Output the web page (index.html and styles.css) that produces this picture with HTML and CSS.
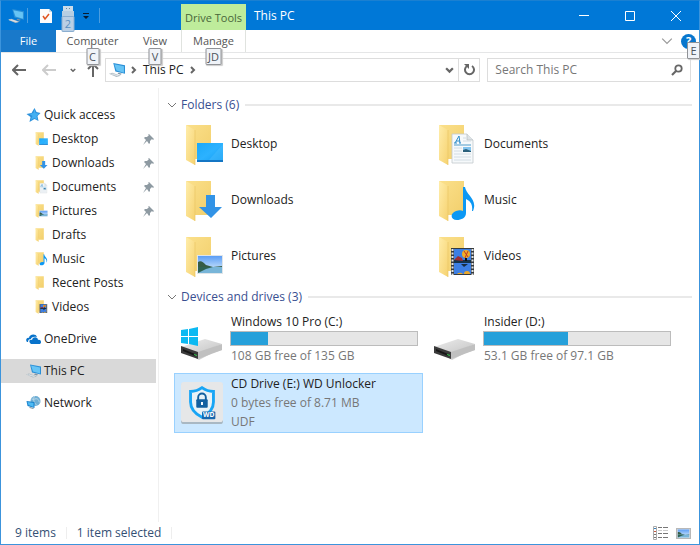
FILE: index.html
```html
<!DOCTYPE html>
<html lang="en">

<head>
    <meta charset="UTF-8">
    <title>This PC</title>
    <link rel="stylesheet" href="styles.css">
</head>

<body>

    <!-- shared icons -->
    <svg class="sprite" aria-hidden="true">
        <defs>
            <linearGradient id="folder-front" x1="0" y1="0" x2="1" y2="1">
                <stop offset="0" stop-color="#ffedaa" />
                <stop offset="1" stop-color="#f6d270" />
            </linearGradient>
            <linearGradient id="folder-back" x1="0" y1="0" x2="1" y2="1">
                <stop offset="0" stop-color="#fbe08b" />
                <stop offset="1" stop-color="#f2cf6c" />
            </linearGradient>
            <linearGradient id="screen" x1="0" y1="0" x2="1" y2="1">
                <stop offset="0" stop-color="#1ba8f8" />
                <stop offset="0.5" stop-color="#2cb2ff" />
                <stop offset="1" stop-color="#129df2" />
            </linearGradient>
            <linearGradient id="sky" x1="0" y1="0" x2="0" y2="1">
                <stop offset="0" stop-color="#5b9df5" />
                <stop offset="1" stop-color="#e6f5fd" />
            </linearGradient>
            <linearGradient id="metal" x1="0" y1="0" x2="1" y2="1">
                <stop offset="0" stop-color="#ececec" />
                <stop offset="1" stop-color="#c4c4c4" />
            </linearGradient>
        </defs>

        <symbol id="pc" viewBox="0 0 15 13">
            <path d="M4 0l11 2v8L6 8z" fill="#2b8fd6" />
            <path d="M5 1l9 2v6L7 7z" fill="#67c4f5" />
            <path d="M9 9l3 1-1 1-3-1z" fill="#7d93a3" />
            <path d="M0 10l3-1 8 3-4 1z" fill="#a9b6bf" />
            <path d="M1 10l7 2M3 10l6 2" stroke="#e7ecef" stroke-width=".6" />
        </symbol>

        <symbol id="folder" viewBox="0 0 38 42">
            <path d="M1 1h25v34H10z" fill="url(#folder-back)" />
            <path d="M1 1l9 5v35l-9-5z" fill="url(#folder-front)" />
            <path d="M10 6v35" stroke="#e9c665" stroke-width=".7" />
        </symbol>

        <symbol id="picture" viewBox="0 0 26 19">
            <path d="M0 0h26v19H0z" fill="#dfe5e9" />
            <path d="M1 1h24v17H1z" fill="url(#sky)" />
            <path d="M1 7c3-2 6 1 8 3l7 2 9-1v1H1z" fill="#365c45" />
            <path d="M1 12h24v6H1z" fill="#78b5d8" />
            <path d="M1 12h15l-7 2-8 4z" fill="#2f6252" />
        </symbol>

        <symbol id="desktop" viewBox="0 0 38 42">
            <use href="#folder" />
            <path d="M12 19h26v19H12z" fill="url(#screen)" />
            <path d="M12 36h26v2H12z" fill="#1476c4" />
            <path d="M24 36 38 20v16z" fill="#55c2ff" opacity=".35" />
        </symbol>

        <symbol id="downloads" viewBox="0 0 38 42">
            <use href="#folder" />
            <path d="M21 15h9v12h7L26 38 14 27h7z" fill="#3293e6" />
        </symbol>

        <symbol id="documents" viewBox="0 0 38 42">
            <use href="#folder" />
            <path d="M14 10h15l6 6v23H14z" fill="#f6f9fb" stroke="#c3c9cd" stroke-width=".8" />
            <path d="M29 10v6h6" fill="#dde3e7" stroke="#b4bbc0" stroke-width=".7" />
            <path d="M17 19l4-7 1 7M18 17h4M16 19h3M21 19h2" fill="none" stroke="#2d8cc9" stroke-width="1" />
            <path d="M16 21h17" stroke="#4f9bc9" />
            <path d="M16 24h8M16 27h8M16 30h17M16 33h17M16 36h17M25 14h3M25 17h8" stroke="#cbd7df" stroke-width=".8" />
            <path d="M25 23h8v5h-8z" fill="#83c4ef" />
            <path d="M25 26l3-1 5 2v1h-8z" fill="#2a607b" />
        </symbol>

        <symbol id="music" viewBox="0 0 38 42">
            <use href="#folder" />
            <path d="M25 7h2c1 8 13 12 8 24h-1c1-7-2-10-6-12v14c0 5-5 7-9 7-7 0-7-7-1-9 3-1 5-1 7 0z" fill="#0c98f4" />
        </symbol>

        <symbol id="videos" viewBox="0 0 38 42">
            <use href="#folder" />
            <path d="M13 12h23v27H13z" fill="#363a3d" />
            <path d="M14.500 13v26M34.500 13v26" stroke="#e1e4e5" stroke-width="2" stroke-dasharray="2 1.500" />
            <path d="M16 13h17v12H16zM16 27h17v11H16z" fill="#3d7fe3" />
            <path d="M16 24h17v3H16z" fill="#15334a" />
            <path d="M16 24l4-4 4 2 1 3z" fill="#9e2f35" />
            <ellipse cx="28" cy="18" rx="4" ry="4" fill="#f2ad24" />
            <path d="M26 15l4 6M30 15l-3 7" stroke="#be352b" />
            <path d="M28 22v3" stroke="#111" stroke-width="2" />
            <path d="M19 38a4 4 0 0 1 6 0M26 38a3 3 0 0 1 6 0" fill="#eda827" />
            <path d="M23 28l3 3 4-3z" fill="#182d40" />
        </symbol>

        <symbol id="pictures" viewBox="0 0 38 42">
            <use href="#folder" />
            <use href="#picture" x="12" y="19" width="26" height="19" />
        </symbol>

        <symbol id="star" viewBox="0 0 14 14">
            <path d="M8 0l2 4 4 1-3 3 1 5-4-2-5 3 1-5-4-3 5-1z" fill="#2d91db" />
            <path d="M8 1l1 4 4 1-3 2 1 4-3-2-4 2 2-4-3-2 4-1z" fill="#43b0f2" />
        </symbol>

        <symbol id="onedrive" viewBox="0 0 15 10">
            <path d="M2 8H1C-1 6 1 3 3 4c0-4 7-5 8-1-4-1-6 1-6 2-2 0-3 1-3 3z" fill="#0873cb" />
            <path d="M4 9c-2-3 1-4 2-3 1-4 6-3 6 0 3-1 4 3 2 4H5z" fill="#0873cb" />
        </symbol>

        <symbol id="network" viewBox="0 0 14 14">
            <circle cx="9" cy="5" r="5" fill="#6faed4" />
            <path d="M5 3c3 1 4-1 6 0s1 4 3 3M8 0c-2 4 0 7 2 9" fill="none" stroke="#b8d8e9" />
            <path d="M0 5l8 1v6l-7-2z" fill="#1b82cb" />
            <path d="M1 6l6 1v4L2 9z" fill="#4dbaf4" />
            <path d="M3 11l4 1v1l-4-1z" fill="#758d9d" />
        </symbol>

        <symbol id="pin" viewBox="0 0 11 11">
            <path d="M6 0l5 5-1 1-1-1-2 2v2L6 10 4 7 0 11l3-5L1 4l1-1h2l2-2-1-1z" fill="#8e9aa2" />
        </symbol>

        <symbol id="chevron" viewBox="0 0 10 6">
            <path d="M1 1l4 4 4-4" fill="none" stroke="currentColor" />
        </symbol>

        <symbol id="chevron-bold" viewBox="0 0 8 6">
            <path d="M1 1l3 3 3-3" fill="none" stroke="currentColor" stroke-width="2" />
        </symbol>

        <symbol id="chevron-right" viewBox="0 0 6 8">
            <path d="M1 1l3 3-3 3" fill="none" stroke="currentColor" stroke-width="2" />
        </symbol>

        <symbol id="arrow" viewBox="0 0 14 12">
            <path d="M14 6H2M6 1L1 6l5 5" fill="none" stroke="currentColor" stroke-width="2" />
        </symbol>

        <symbol id="drive" viewBox="0 0 42 34">
            <path d="M0 22l16 9 25-8v-2L18 33z" fill="#8b8b8b" opacity=".4" />
            <path d="M0 20l24-8 17 5-24 10z" fill="url(#metal)" />
            <path d="M17 25l24-8v6l-24 9z" fill="#c0c0c0" />
            <path d="M0 19l17 6v7L0 26z" fill="#3b3b3b" />
            <path d="M2 22l12 5v2L2 24z" fill="#171717" />
            <path d="M13 27l3 1v1l-3-1z" fill="#2fc748" />
        </symbol>
    </svg>

    <div class="window">

        <header class="titlebar">
            <div class="quick-bar">
                <svg class="icon-pc"><use href="#pc" /></svg>
                <span class="bar-line"></span>
                <button class="quick-btn" aria-label="Properties">
                    <svg width="12" height="14" viewBox="0 0 12 14">
                        <path d="M0 0h9l3 3v11H0z" fill="#fbfbfb" />
                        <path d="M9 0v3h3" fill="#d3dce3" />
                        <path d="M3 7l2 3 4-5" fill="none" stroke="#e0531f" stroke-width="1.500" />
                    </svg>
                </button>
                <button class="quick-btn" aria-label="Eject">
                    <svg width="12" height="20" viewBox="0 0 12 20">
                        <path d="M1 0h10v5H1z" fill="#cadbe9" />
                        <path d="M0 5h12v15H0z" fill="#b7cee2" />
                        <path d="M4 2h1v1H4zM7 2h1v1H7z" fill="#728899" />
                    </svg>
                    <kbd class="keytip keytip-dim">2</kbd>
                </button>
                <button class="quick-btn quick-menu" aria-label="Customize toolbar">
                    <svg width="6" height="6" viewBox="0 0 6 6">
                        <path d="M0 0h6v1H0zM0 3h6L3 6z" fill="#071d33" />
                    </svg>
                </button>
                <span class="bar-line"></span>
            </div>
            <div class="context-tab">Drive Tools</div>
            <h1 class="window-title">This PC</h1>
            <div class="window-controls">
                <button aria-label="Minimize">
                    <svg width="10" height="10" viewBox="0 0 10 10"><path d="M0 4.500h10" stroke="#fff" /></svg>
                </button>
                <button aria-label="Maximize">
                    <svg width="10" height="10" viewBox="0 0 10 10"><path d="M.5.5h9v9h-9z" fill="none" stroke="#fff" /></svg>
                </button>
                <button aria-label="Close">
                    <svg width="10" height="10" viewBox="0 0 10 10"><path d="M0 0l10 10M10 0L0 10" stroke="#fff" /></svg>
                </button>
            </div>
        </header>

        <nav class="ribbon">
            <button class="tab tab-file">File</button>
            <button class="tab tab-computer">Computer<kbd class="keytip">C</kbd></button>
            <button class="tab tab-view">View<kbd class="keytip">V</kbd></button>
            <button class="tab tab-manage">Manage<kbd class="keytip">JD</kbd></button>
            <div class="ribbon-right">
                <button class="expand" aria-label="Expand the Ribbon">
                    <svg width="12" height="8"><use href="#chevron" /></svg>
                </button>
                <button class="help" aria-label="Help">?<kbd class="keytip">E</kbd></button>
            </div>
        </nav>

        <div class="address-row">
            <div class="nav-buttons">
                <button aria-label="Back"><svg width="14" height="12"><use href="#arrow" /></svg></button>
                <button class="forward" aria-label="Forward"><svg width="14" height="12"><use href="#arrow" /></svg></button>
                <button class="recent" aria-label="Recent locations"><svg width="6" height="5"><use href="#chevron-bold" /></svg></button>
                <button class="up" aria-label="Up"><svg width="14" height="12"><use href="#arrow" /></svg></button>
            </div>
            <div class="address">
                <svg class="icon-pc"><use href="#pc" /></svg>
                <button aria-label="Locations"><svg width="6" height="8"><use href="#chevron-right" /></svg></button>
                <button class="crumb">This PC</button>
                <button aria-label="Folders in This PC"><svg width="6" height="8"><use href="#chevron-right" /></svg></button>
                <button class="history" aria-label="Previous locations"><svg width="9" height="7"><use href="#chevron-bold" /></svg></button>
                <button class="refresh" aria-label="Refresh">
                    <svg width="12" height="12" viewBox="0 0 12 12">
                        <path d="M9 2a4.500 4.500 0 1 1-5 0" fill="none" stroke="#666" stroke-width="2" />
                        <path d="M1 0h5v5z" fill="#666" />
                    </svg>
                </button>
            </div>
            <label class="search">
                <input type="text" placeholder="Search This PC" aria-label="Search This PC">
                <svg width="12" height="12" viewBox="0 0 12 12">
                    <circle cx="7.500" cy="4.500" r="3.200" fill="none" stroke="#666" stroke-width="1.800" />
                    <path d="M5 7l-4 4" stroke="#666" stroke-width="2.200" />
                </svg>
            </label>
        </div>

        <div class="content">
            <nav class="sidebar">
                <a class="side-item" href="#"><svg><use href="#star" /></svg>Quick access</a>
                <a class="side-item sub" href="#"><svg><use href="#desktop" /></svg>Desktop<svg class="pin"><use href="#pin" /></svg></a>
                <a class="side-item sub" href="#"><svg><use href="#downloads" /></svg>Downloads<svg class="pin"><use href="#pin" /></svg></a>
                <a class="side-item sub" href="#"><svg><use href="#documents" /></svg>Documents<svg class="pin"><use href="#pin" /></svg></a>
                <a class="side-item sub" href="#"><svg><use href="#pictures" /></svg>Pictures<svg class="pin"><use href="#pin" /></svg></a>
                <a class="side-item sub" href="#"><svg><use href="#folder" /></svg>Drafts</a>
                <a class="side-item sub" href="#"><svg><use href="#music" /></svg>Music</a>
                <a class="side-item sub" href="#"><svg><use href="#folder" /></svg>Recent Posts</a>
                <a class="side-item sub" href="#"><svg><use href="#videos" /></svg>Videos</a>
                <a class="side-item root" href="#"><svg><use href="#onedrive" /></svg>OneDrive</a>
                <a class="side-item root selected" href="#"><svg><use href="#pc" /></svg>This PC</a>
                <a class="side-item root" href="#"><svg><use href="#network" /></svg>Network</a>
            </nav>

            <main class="files">
                <section>
                    <h2 class="group-title"><svg width="10" height="6"><use href="#chevron" /></svg>Folders (6)</h2>
                    <div class="folder-grid">
                        <a class="folder" href="#"><svg><use href="#desktop" /></svg>Desktop</a>
                        <a class="folder" href="#"><svg><use href="#documents" /></svg>Documents</a>
                        <a class="folder" href="#"><svg><use href="#downloads" /></svg>Downloads</a>
                        <a class="folder" href="#"><svg><use href="#music" /></svg>Music</a>
                        <a class="folder" href="#"><svg><use href="#pictures" /></svg>Pictures</a>
                        <a class="folder" href="#"><svg><use href="#videos" /></svg>Videos</a>
                    </div>
                </section>
                <section>
                    <h2 class="group-title"><svg width="10" height="6"><use href="#chevron" /></svg>Devices and drives (3)</h2>
                    <div class="drive-grid">
                        <a class="drive" href="#">
                            <svg class="drive-icon" viewBox="0 0 42 34">
                                <use href="#drive" />
                                <path d="M0 3l7-1v7H0zM8 2l9-2v9H8zM0 10h7v7l-7-1zM8 10h9v9l-9-2z" fill="#0bb9f2" />
                            </svg>
                            <div class="drive-info">
                                <span class="drive-name">Windows 10 Pro (C:)</span>
                                <div class="usage"><div class="used" style="width: 20%"></div></div>
                                <span class="drive-note">108 GB free of 135 GB</span>
                            </div>
                        </a>
                        <a class="drive" href="#">
                            <svg class="drive-icon"><use href="#drive" /></svg>
                            <div class="drive-info">
                                <span class="drive-name">Insider (D:)</span>
                                <div class="usage"><div class="used" style="width: 45%"></div></div>
                                <span class="drive-note">53.1 GB free of 97.1 GB</span>
                            </div>
                        </a>
                        <a class="drive selected" href="#">
                            <svg class="cd-icon" viewBox="0 0 44 46">
                                <rect x="0" y="2" width="44" height="43" rx="3" fill="#a9b8c3" />
                                <rect x="0" y="1" width="44" height="42" rx="3" fill="#e6e7e8" />
                                <path d="M22 7c4 3 8 4 12 4v11c0 8-6 13-12 16-6-3-12-8-12-16V11c4 0 8-1 12-4z" fill="#e9f2f7" stroke="#18a5f5" stroke-width="3" />
                                <path d="M18 20v-3a4 4 0 0 1 8 0v3" fill="none" stroke="#125f9f" stroke-width="2" />
                                <rect x="16" y="19" width="12" height="9" rx="1" fill="#125f9f" />
                                <path d="M22 22v3" stroke="#fff" stroke-width="2" />
                                <rect x="22" y="32" width="14" height="8" rx="1" fill="#1768ae" />
                                <text class="wd-mark" x="23" y="38">WD</text>
                            </svg>
                            <div class="drive-info">
                                <span class="drive-name">CD Drive (E:) WD Unlocker</span>
                                <span class="drive-note">0 bytes free of 8.71 MB</span>
                                <span class="drive-note">UDF</span>
                            </div>
                        </a>
                    </div>
                </section>
            </main>
        </div>

        <footer class="statusbar">
            <span class="status">9 items</span>
            <span class="status">1 item selected</span>
            <div class="view-buttons">
                <button aria-label="Details view">
                    <svg width="15" height="14" viewBox="0 0 15 14">
                        <path d="M.5.5h3v13h-3z" fill="#fff" stroke="#aaa" />
                        <path d="M1 2h2v1H1z" fill="#397fb8" />
                        <path d="M1 5h2v1H1z" fill="#c65a42" />
                        <path d="M1 8h2v1H1zM1 11h2v1H1z" fill="#777" />
                        <path d="M5 1.500h4M10 1.500h5M5 7.500h4M10 7.500h5M5 11.500h4M10 11.500h5" stroke="#777" />
                        <path d="M5 4.500h4M10 4.500h5" stroke="#ccc" />
                    </svg>
                </button>
                <button aria-label="Large icons view">
                    <svg width="15" height="11" viewBox="0 0 15 11">
                        <path d="M0 0h15v11H0z" fill="#b8b8b8" />
                        <use href="#picture" x="1" y="1" width="13" height="9" />
                    </svg>
                </button>
            </div>
        </footer>
    </div>

</body>

</html>
```

FILE: styles.css
```css
* {
    box-sizing: border-box;
}

body {
    margin: 0;
    font-family: "Open Sans", "Noto Sans", sans-serif;
    font-size: 12px;
    line-height: 18px;
    color: #222;
    background: #fff;
}

button {
    position: relative;
    display: flex;
    align-items: center;
    justify-content: center;
    padding: 0;
    border: 0;
    background: none;
    font: inherit;
    color: #666;
}

a {
    color: inherit;
    text-decoration: none;
}

svg {
    flex: none;
}

.sprite {
    position: absolute;
    width: 0;
    height: 0;
}

.window {
    display: flex;
    flex-direction: column;
    min-height: 100vh;
    border: 1px solid #3c94dc;
    border-top-color: #1b80d1;
}

.icon-pc {
    width: 16px;
    height: 14px;
}

/* title bar */
.titlebar {
    display: flex;
    height: 29px;
    background: #0078d7;
    color: #fff;
}

.quick-bar {
    display: flex;
    align-items: center;
    width: 180px;
    padding-left: 7px;
}

.bar-line {
    width: 1px;
    height: 15px;
    margin: 0 3px;
    background: #4a9de0;
}

.quick-btn {
    width: 22px;
    height: 28px;
}

.quick-btn:first-of-type {
    margin-left: 4px;
}

.quick-menu {
    width: 14px;
}

.quick-btn + .bar-line {
    margin-left: 6px;
}

.context-tab {
    width: 65px;
    margin-top: 3px;
    padding-top: 5px;
    background: #beec9b;
    color: #48663a;
    font-size: 11px;
    text-align: center;
    white-space: nowrap;
}

.window-title {
    margin: 0;
    padding: 6px 8px;
    font-size: 12px;
    font-weight: normal;
}

.window-controls {
    display: flex;
    margin-left: auto;
}

.window-controls button {
    width: 46px;
}

/* ribbon */
.ribbon {
    display: flex;
    height: 23px;
    border-bottom: 1px solid #e5e6e7;
}

.tab {
    font-size: 11px;
    color: #555;
}

.tab-file {
    width: 55px;
    background: #1979ca;
    color: #fff;
}

.tab-computer {
    width: 73px;
}

.tab-view {
    width: 52px;
}

.tab-manage {
    width: 65px;
    border: solid #e0e3df;
    border-width: 0 1px;
}

.ribbon-right {
    display: flex;
    align-items: center;
    gap: 8px;
    margin-left: auto;
}

.expand {
    color: #999;
}

.help {
    width: 15px;
    height: 15px;
    margin-right: 3px;
    border-radius: 50%;
    background: #0877ce;
    color: #fff;
    font-size: 11px;
    font-weight: bold;
}

/* key hints over the ribbon */
.keytip {
    position: absolute;
    z-index: 1;
    top: 18px;
    left: 50%;
    min-width: 13px;
    padding: 0 2px;
    border: 1px solid #909296;
    border-radius: 1px;
    background: #f0f3f8;
    box-shadow: 1px 1px 1px #ccc;
    color: #4d535c;
    font-family: inherit;
    font-size: 11px;
    font-weight: normal;
    line-height: 15px;
    text-align: center;
    transform: translateX(-50%);
}

.help .keytip {
    top: 8px;
    left: auto;
    right: -4px;
    transform: none;
}

.keytip-dim {
    top: 14px;
    border-color: #8baed0;
    background: #b9cfe5;
    box-shadow: none;
    color: #598fc1;
    line-height: 14px;
}

/* address row */
.address-row {
    display: flex;
    gap: 7px;
    padding: 5px 8px 0 11px;
}

.nav-buttons {
    display: flex;
    align-items: center;
    gap: 16px;
    width: 86px;
}

.forward {
    color: #ccc;
}

.recent {
    margin: 0 -6px 0 -2px;
}

.up svg {
    transform: rotate(90deg);
}

.address {
    display: flex;
    flex: 1;
    align-items: center;
    height: 24px;
    padding-left: 3px;
    border: 1px solid #ddd;
}

.address button {
    width: 18px;
    height: 100%;
}

.address .crumb {
    width: auto;
    color: #222;
}

.address .history {
    margin-left: auto;
}

.address .refresh {
    width: 21px;
    border-left: 1px solid #ddd;
}

.search {
    display: flex;
    align-items: center;
    width: 30%;
    padding: 0 7px;
    border: 1px solid #ddd;
}

.search input {
    flex: 1;
    min-width: 0;
    padding: 0;
    border: 0;
    outline: 0;
    font: inherit;
}

.search input::placeholder {
    color: #777;
    opacity: 1;
}

/* main part */
.content {
    display: flex;
    flex: 1;
    margin-top: 6px;
}

.sidebar {
    width: 158px;
    padding: 15px 2px 0 0;
    border-right: 1px solid #f0f0f0;
}

.side-item {
    display: flex;
    align-items: center;
    gap: 3px;
    height: 24px;
    padding-left: 25px;
}

.side-item svg {
    width: 15px;
    height: 14px;
}

.side-item.sub {
    padding-left: 33px;
}

.side-item.root {
    margin-top: 8px;
}

.side-item .pin {
    width: 11px;
    height: 11px;
    margin-left: auto;
    margin-right: 2px;
}

.side-item.selected {
    background: #d9d9d9;
}

.files {
    flex: 1;
    padding: 8px 7px 0 8px;
}

.group-title {
    display: flex;
    align-items: center;
    gap: 4px;
    margin: 0;
    font-size: 12px;
    font-weight: normal;
    color: #394f91;
}

.group-title svg {
    color: #777;
}

.group-title::after {
    content: "";
    flex: 1;
    height: 2px;
    margin-left: 2px;
    background: #e9e9e9;
}

.folder-grid,
.drive-grid {
    display: grid;
    grid-template-columns: repeat(auto-fill, 249px);
    column-gap: 4px;
    padding-top: 6px;
    padding-left: 7px;
}

.folder {
    display: flex;
    gap: 8px;
    height: 56px;
    padding: 4px 11px;
    line-height: 40px;
}

.folder svg {
    width: 38px;
    height: 42px;
}

.drive-grid {
    row-gap: 2px;
    padding-top: 5px;
}

.drive {
    display: flex;
    gap: 8px;
    min-height: 60px;
    padding: 0 4px 0 6px;
    border: 1px solid transparent;
}

.drive.selected {
    border-color: #99d1ff;
    background: #cce8ff;
}

.drive-icon {
    width: 42px;
    height: 34px;
    margin-top: 15px;
}

.cd-icon {
    width: 42px;
    height: 46px;
    margin-top: 6px;
}

.wd-mark {
    fill: #fff;
    font-size: 7px;
    font-weight: bold;
}

.drive-info {
    display: flex;
    flex: 1;
    flex-direction: column;
}

.drive-name,
.drive-note {
    padding-top: 1px;
}

.drive-note {
    color: #777;
}

.usage {
    height: 15px;
    margin-left: -1px;
    border: 1px solid #bcbcbc;
    background: #e6e6e6;
}

.used {
    height: 100%;
    background: #26a0da;
}

/* status bar */
.statusbar {
    display: flex;
    align-items: center;
    height: 22px;
    padding: 0 8px 0 14px;
    color: #345074;
}

.status {
    margin-right: 10px;
    padding-right: 10px;
    border-right: 1px solid #eee;
    line-height: 12px;
}

.view-buttons {
    display: flex;
    gap: 8px;
    margin-left: auto;
}
```
